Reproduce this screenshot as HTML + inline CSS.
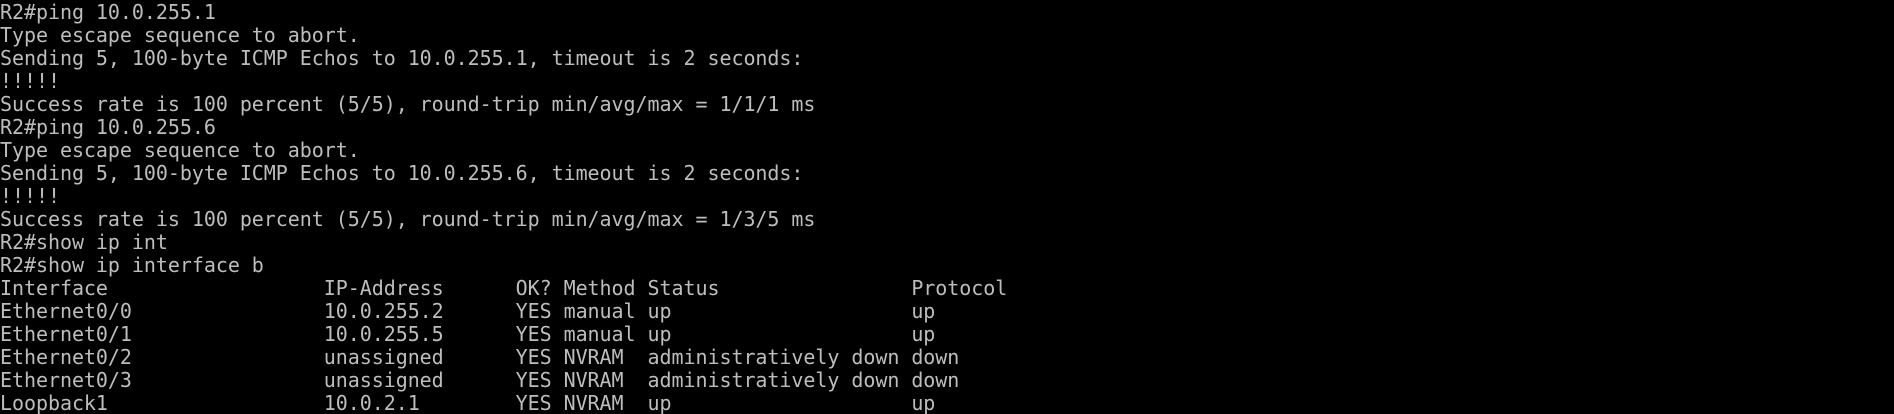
<!DOCTYPE html>
<html><head><style>
html,body{margin:0;padding:0;background:#000;width:1894px;height:414px;overflow:hidden}
pre{margin:0;font-family:"DejaVu Sans Mono","Liberation Mono",monospace;font-size:20px;letter-spacing:-0.05px;line-height:23px;color:#bdbdbd;white-space:pre;position:relative;top:1px}
</style></head><body><pre>R2#ping 10.0.255.1
Type escape sequence to abort.
Sending 5, 100-byte ICMP Echos to 10.0.255.1, timeout is 2 seconds:
!!!!!
Success rate is 100 percent (5/5), round-trip min/avg/max = 1/1/1 ms
R2#ping 10.0.255.6
Type escape sequence to abort.
Sending 5, 100-byte ICMP Echos to 10.0.255.6, timeout is 2 seconds:
!!!!!
Success rate is 100 percent (5/5), round-trip min/avg/max = 1/3/5 ms
R2#show ip int
R2#show ip interface b
Interface                  IP-Address      OK? Method Status                Protocol
Ethernet0/0                10.0.255.2      YES manual up                    up
Ethernet0/1                10.0.255.5      YES manual up                    up
Ethernet0/2                unassigned      YES NVRAM  administratively down down
Ethernet0/3                unassigned      YES NVRAM  administratively down down
Loopback1                  10.0.2.1        YES NVRAM  up                    up
</pre></body></html>
